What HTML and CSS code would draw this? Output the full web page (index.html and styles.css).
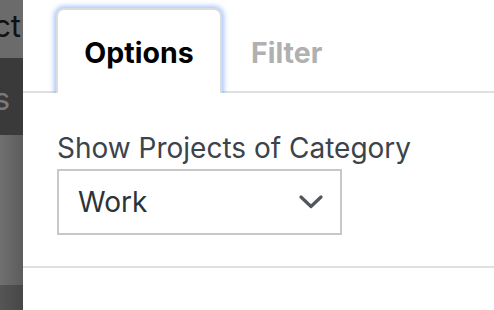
FILE: index.html
```html
<!DOCTYPE html>
<html>
<head>
<meta charset="utf-8">
<link rel="stylesheet" href="styles.css">
</head>
<body>
<div class="app">
  <div class="sidebar">
    <div class="sb-a"><span>Select</span></div>
    <div class="sb-b"><span>Projects</span></div>
    <div class="sb-c"></div>
    <div class="sb-d"></div>
  </div>
  <div class="panel">
    <div class="tabs">
      <div class="tab active">Options</div>
      <div class="tab">Filter</div>
    </div>
    <div class="body">
      <label class="label">Show Projects of Category</label>
      <div class="select">
        <span>Work</span>
        <svg class="chev" width="24" height="14" viewBox="0 0 24 14"><path d="M2 2 L12 11.5 L22 2" fill="none" stroke="#50575e" stroke-width="3.2" stroke-linecap="round" stroke-linejoin="round"/></svg>
      </div>
    </div>
    <div class="divider"></div>
  </div>
</div>
</body>
</html>
```
FILE: styles.css
```css
html, body {
  margin: 0;
  padding: 0;
  height: 310px;
  overflow: hidden;
  background: #fff;
}
.app {
  display: flex;
  height: 310px;
  font-family: Inter, "Liberation Sans", sans-serif;
}
.sidebar {
  width: 23px;
  flex: none;
  display: flex;
  flex-direction: column;
}
.sb-a {
  height: 58px;
  background: #6b6b6b;
  display: flex;
  justify-content: flex-end;
  align-items: flex-start;
  overflow: hidden;
  color: #111;
  font-size: 31px;
  padding-right: 2px;
  line-height: 52px;
  white-space: nowrap;
}
.sb-b {
  height: 77px;
  background: #3a3a3a;
  display: flex;
  justify-content: flex-end;
  overflow: hidden;
  color: #7a7a7a;
  font-size: 31px;
  line-height: 82px;
  padding-right: 13px;
  white-space: nowrap;
}
.sb-c {
  height: 150px;
  background: linear-gradient(to right, #707070, #5c5c5c);
}
.sb-d {
  flex: 1;
  background: linear-gradient(to right, #555, #474747);
}
.panel {
  flex: 1;
  display: flex;
  flex-direction: column;
  background: #fff;
}
.tabs {
  height: 91px;
  border-bottom: 2px solid #e0e0e0;
  display: flex;
  align-items: flex-end;
  padding-left: 33px;
  gap: 8px;
}
.tab {
  height: 83px;
  box-sizing: border-box;
  margin-bottom: -2px;
  padding: 0 21px;
  display: flex;
  align-items: center;
  font-size: 28.5px;
  font-weight: 700;
  color: #b0b0b0;
  padding-top: 2px;
}
.tab.active {
  width: 166px;
  justify-content: center;
  color: #000;
  background: #fff;
  border: 2px solid #dcdcdc;
  border-bottom: none;
  border-radius: 8px 8px 0 0;
  box-shadow: 0 0 5px 2px rgba(90, 150, 255, 0.55);
  height: 85px;
  padding-left: 0;
  padding-right: 0;
  clip-path: inset(-10px -10px 0 -10px);
}
.body {
  padding: 39px 34px 0;
  height: 175px;
  box-sizing: border-box;
  border-bottom: 2px solid #e0e0e0;
}
.label {
  display: block;
  font-size: 28px;
  color: #3c434a;
  line-height: 32px;
}
.select {
  margin-top: 5px;
  width: 285px;
  height: 66px;
  box-sizing: border-box;
  border: 2px solid #c8c8c8;
  display: flex;
  align-items: center;
  justify-content: space-between;
  padding: 0 17px 0 19px;
  font-size: 28px;
  color: #2c3338;
}
.divider {
  flex: 1;
}
```
